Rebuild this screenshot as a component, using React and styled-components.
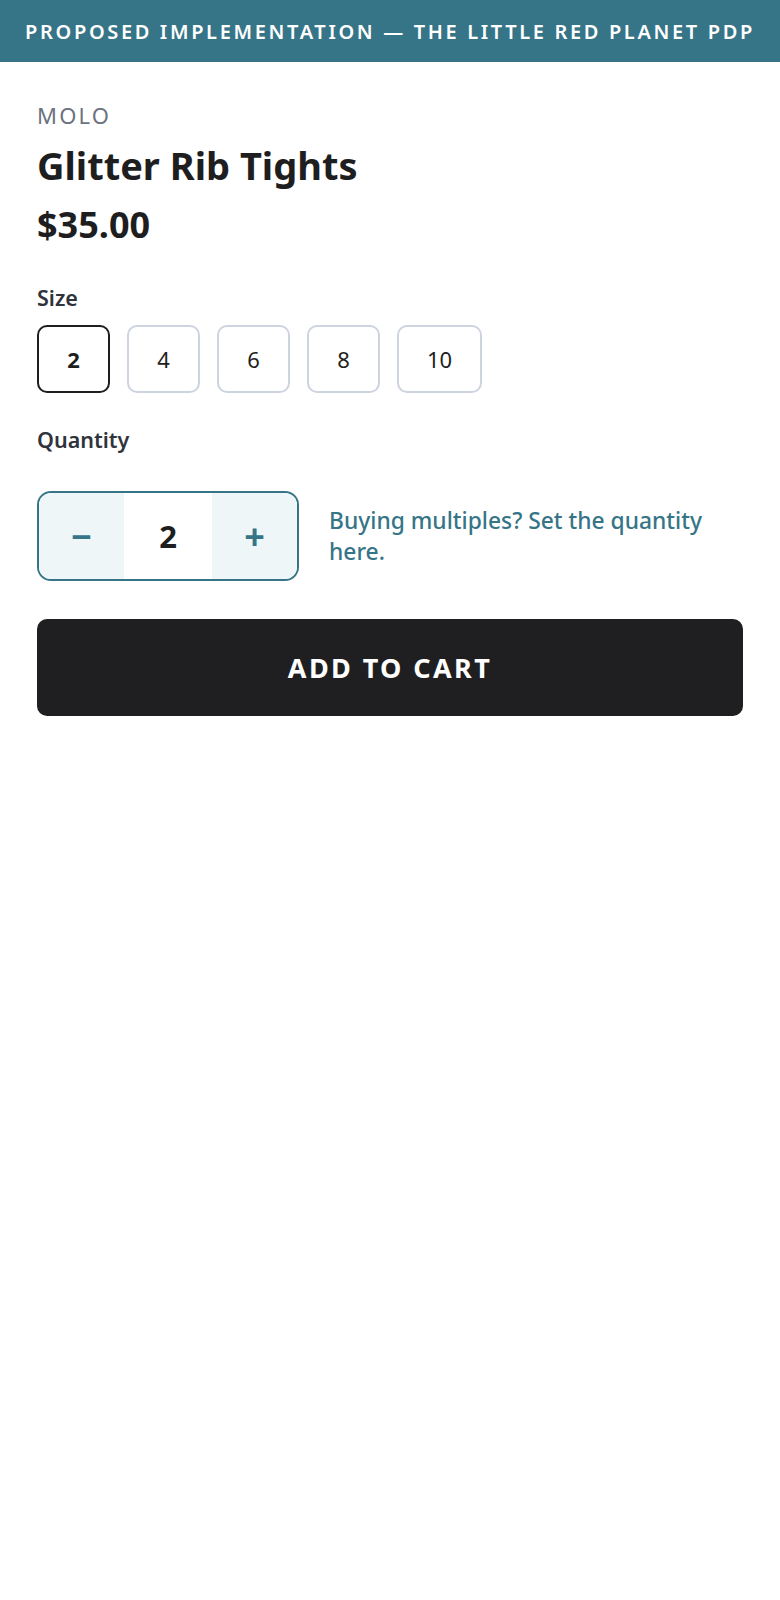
import React, { useState } from 'react';
import styled, { createGlobalStyle } from 'styled-components';

const GlobalStyle = createGlobalStyle`
  * { box-sizing: border-box; }
  body {
    margin: 0;
    background: #ffffff;
    font-family: "Noto Sans", "Open Sans", sans-serif;
    color: #1e1e20;
  }
`;

const SIZES = ['2', '4', '6', '8', '10'];

export default function App() {
  const [size, setSize] = useState('2');
  const [qty, setQty] = useState(2);

  return (
    <>
      <GlobalStyle />
      <Banner>Proposed implementation — The Little Red Planet PDP</Banner>
      <Main>
        <Brand>Molo</Brand>
        <Title>Glitter Rib Tights</Title>
        <Price>$35.00</Price>

        <Label>Size</Label>
        <SizeRow>
          {SIZES.map((s) => (
            <SizeButton key={s} $active={s === size} onClick={() => setSize(s)}>
              {s}
            </SizeButton>
          ))}
        </SizeRow>

        <QtyLabel>Quantity</QtyLabel>
        <QtyRow>
          <Stepper>
            <StepButton onClick={() => setQty((q) => Math.max(1, q - 1))}>−</StepButton>
            <QtyValue>{qty}</QtyValue>
            <StepButton onClick={() => setQty((q) => q + 1)}>+</StepButton>
          </Stepper>
          <Hint>Buying multiples? Set the quantity here.</Hint>
        </QtyRow>

        <CartButton>Add to cart</CartButton>
      </Main>
    </>
  );
}

const Banner = styled.header`
  height: 62px;
  display: flex;
  align-items: center;
  justify-content: center;
  background: #367587;
  color: #ffffff;
  font-size: 20px;
  font-weight: 600;
  letter-spacing: 2.65px;
  text-transform: uppercase;
  white-space: nowrap;
`;

const Main = styled.main`
  display: flex;
  flex-direction: column;
  padding: 39px 37px 40px;
`;

const Brand = styled.div`
  font-size: 22px;
  line-height: 28px;
  letter-spacing: 2.2px;
  text-transform: uppercase;
  color: #6b7280;
`;

const Title = styled.h1`
  margin: 14px 0 0;
  font-size: 38px;
  line-height: 44px;
  font-weight: 700;
  color: #1e1e20;
`;

const Price = styled.div`
  margin-top: 18px;
  font-size: 36px;
  line-height: 40px;
  font-weight: 700;
  color: #1e1e20;
`;

const Label = styled.div`
  margin-top: 39px;
  font-size: 21.5px;
  line-height: 28px;
  font-weight: 600;
  color: #30333c;
`;

const QtyLabel = styled(Label)`
  margin-top: 33px;
`;

const SizeRow = styled.div`
  display: flex;
  gap: 17px;
  margin-top: 13px;
`;

const SizeButton = styled.button`
  min-width: 73px;
  height: 68px;
  padding: 0 28px;
  border-radius: 10px;
  border: 2px solid ${(p) => (p.$active ? '#1e1e20' : '#cdd4e0')};
  background: #ffffff;
  font-family: inherit;
  font-size: 22px;
  font-weight: ${(p) => (p.$active ? 700 : 400)};
  color: #1e1e20;
  cursor: pointer;
`;

const QtyRow = styled.div`
  display: flex;
  align-items: center;
  gap: 30px;
  margin-top: 37px;
`;

const Stepper = styled.div`
  display: flex;
  flex: none;
  width: 262px;
  height: 90px;
  border: 2px solid #367587;
  border-radius: 14px;
  overflow: hidden;
`;

const StepButton = styled.button`
  width: 85px;
  border: 0;
  background: #eef6f8;
  color: #367587;
  font-family: inherit;
  font-size: 36px;
  font-weight: 700;
  cursor: pointer;
`;

const QtyValue = styled.div`
  flex: 1;
  display: flex;
  align-items: center;
  justify-content: center;
  background: #ffffff;
  font-size: 31px;
  font-weight: 700;
  color: #1e1e20;
`;

const Hint = styled.p`
  margin: 0;
  font-size: 22.8px;
  line-height: 31px;
  font-weight: 500;
  color: #367587;
`;

const CartButton = styled.button`
  margin-top: 38px;
  height: 97px;
  border: 0;
  border-radius: 10px;
  background: #1f1f21;
  color: #ffffff;
  font-family: inherit;
  font-size: 27px;
  font-weight: 700;
  letter-spacing: 2.4px;
  text-transform: uppercase;
  cursor: pointer;
`;
